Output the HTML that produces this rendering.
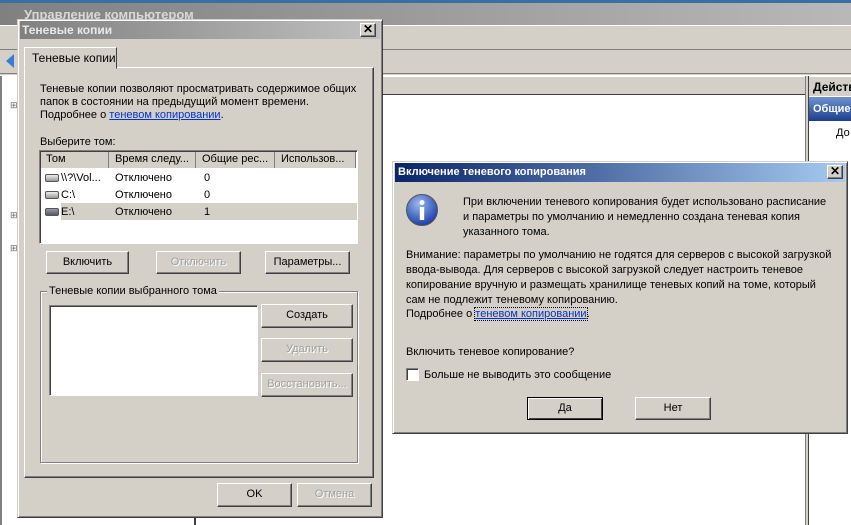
<!DOCTYPE html>
<html><head><meta charset="utf-8"><style>
*{box-sizing:border-box;margin:0;padding:0}
body{width:851px;height:525px;overflow:hidden;position:relative;background:#fff;font-family:"Liberation Sans",sans-serif;font-size:11px;color:#000}
.a{position:absolute;white-space:nowrap}
.btn{position:absolute;background:#d4d0c8;border:1px solid;border-color:#fff #404040 #404040 #fff;box-shadow:inset -1px -1px 0 #808080;text-align:center;line-height:20px;font-size:11px}
.dis{color:#a0a0a0;text-shadow:1px 1px 0 #fff}
.sunk{border:1px solid;border-color:#808080 #fff #fff #808080;box-shadow:inset 1px 1px 0 #404040}
.lnk{color:#0033cc;text-decoration:underline}
.drv{display:inline-block;width:14px;height:8px;border:1px solid #555;border-radius:2px;background:linear-gradient(#eee,#999);vertical-align:middle;margin-right:2px}
</style></head><body>
<div class="a" style="left:0;top:0;width:851px;height:3px;background:#3a6ea5"></div>
<div class="a" style="left:0;top:3px;width:851px;height:22px;background:linear-gradient(90deg,#808080,#b8b8b8);color:#d8d8d8;font-weight:bold;font-size:13px;padding:4px 0 0 24px">Управление компьютером</div>
<div class="a" style="left:0;top:25px;width:851px;height:50px;background:#d4d0c8;border-top:1px solid #fff"></div>
<div class="a" style="left:0;top:49px;width:851px;height:1px;background:#808080"></div>
<div class="a" style="left:0;top:73px;width:851px;height:1px;background:#808080"></div>
<div class="a" style="left:6px;top:54px;width:0;height:0;border:7px solid transparent;border-right:8px solid #3a7bd5;border-left:0"></div>
<div class="a" style="left:0;top:76px;width:851px;height:449px;background:#fff"></div>
<div class="a" style="left:196px;top:77px;width:612px;height:18px;background:#d4d0c8;border-bottom:1px solid #404040"></div>
<div class="a" style="left:805px;top:76px;width:4px;height:449px;background:#d4d0c8;border-left:1px solid #808080;border-right:1px solid #404040"></div>
<div class="a" style="left:809px;top:77px;width:42px;height:19px;background:#d4d0c8;font-weight:bold;font-size:12px;padding:3px 0 0 4px;overflow:hidden">Действия</div>
<div class="a" style="left:809px;top:97px;width:42px;height:24px;background:linear-gradient(#6d93d0,#1c3e8c);color:#fff;font-weight:bold;font-size:11px;padding:6px 0 0 4px;overflow:hidden">Общие</div>
<div class="a" style="left:836px;top:127px;font-size:11px">До</div>
<div class="a" style="left:0;top:76px;width:2px;height:449px;background:#808080"></div>
<div class="a" style="left:194px;top:76px;width:2px;height:449px;background:#404040"></div>
<div class="a" style="left:10px;top:100px;font-size:9px;color:#666">⊞</div>
<div class="a" style="left:10px;top:210px;font-size:9px;color:#666">⊞</div>
<div class="a" style="left:10px;top:243px;font-size:9px;color:#666">⊞</div>

<div class="a" style="left:17px;top:19px;width:366px;height:499px;background:#d4d0c8;border:1px solid;border-color:#d4d0c8 #404040 #404040 #d4d0c8;box-shadow:inset 1px 1px 0 #fff,inset -1px -1px 0 #808080"></div>
<div class="a" style="left:20px;top:21px;width:360px;height:18px;background:linear-gradient(90deg,#808080,#c0c0c0);color:#e8e8e8;font-weight:bold;font-size:12px;padding:2px 0 0 2px">Теневые копии</div>
<div class="btn" style="left:360px;top:23px;width:16px;height:14px;line-height:11px;font-weight:bold;font-size:12px">✕</div>
<div class="a" style="left:24px;top:67px;width:350px;height:411px;border:1px solid;border-color:#fff #404040 #404040 #fff;box-shadow:inset -1px -1px 0 #808080"></div>
<div class="a" style="left:24px;top:47px;width:93px;height:22px;background:#d4d0c8;border:1px solid;border-color:#fff #404040 #d4d0c8 #fff;padding:3px 0 0 7px;font-size:12px">Теневые копии</div>
<div class="a" style="left:40px;top:83px;line-height:13px;font-size:11px">Теневые копии позволяют просматривать содержимое общих<br>папок в состоянии на предыдущий момент времени.<br>Подробнее о <span class="lnk">теневом копировании</span>.</div>
<div class="a" style="left:40px;top:136px;font-size:11px">Выберите том:</div>
<div class="a sunk" style="left:39px;top:150px;width:319px;height:94px;background:#fff"></div>
<div class="a" style="left:41px;top:152px;width:315px;height:16px;background:#d4d0c8;font-size:11px">
<div class="a" style="left:0;width:68px;height:16px;border-right:1px solid #808080;padding:1px 0 0 5px">Том</div>
<div class="a" style="left:68px;width:87px;height:16px;border-right:1px solid #808080;padding:1px 0 0 6px">Время следу...</div>
<div class="a" style="left:155px;width:79px;height:16px;border-right:1px solid #808080;padding:1px 0 0 6px">Общие рес...</div>
<div class="a" style="left:234px;width:81px;height:16px;border-right:1px solid #808080;padding:1px 0 0 6px">Использов...</div></div>
<div class="a" style="left:61px;top:203px;width:296px;height:17px;background:#d4d0c8"></div>
<div class="a" style="left:45px;top:170px;line-height:17px;font-size:11px"><span class="drv"></span>\\?\Vol...<br><span class="drv"></span>C:\<br><span class="drv" style="background:linear-gradient(#99a,#556)"></span>E:\</div>
<div class="a" style="left:115px;top:170px;line-height:17px;font-size:11px">Отключено<br>Отключено<br>Отключено</div>
<div class="a" style="left:204px;top:170px;line-height:17px;font-size:11px">0<br>0<br>1</div>
<div class="btn" style="left:46px;top:251px;width:83px;height:23px">Включить</div>
<div class="btn dis" style="left:156px;top:251px;width:85px;height:23px">Отключить</div>
<div class="btn" style="left:265px;top:251px;width:85px;height:23px">Параметры...</div>
<div class="a" style="left:40px;top:291px;width:318px;height:172px;border:1px solid #808080;box-shadow:1px 1px 0 #fff,inset 1px 1px 0 #fff"></div>
<div class="a" style="left:47px;top:285px;background:#d4d0c8;padding:0 2px;font-size:11px">Теневые копии выбранного тома</div>
<div class="a sunk" style="left:49px;top:305px;width:209px;height:91px;background:#fff"></div>
<div class="btn" style="left:261px;top:304px;width:92px;height:24px">Создать</div>
<div class="btn dis" style="left:261px;top:338px;width:92px;height:24px">Удалить</div>
<div class="btn dis" style="left:261px;top:373px;width:92px;height:24px">Восстановить...</div>
<div class="btn" style="left:217px;top:483px;width:75px;height:24px">OK</div>
<div class="btn dis" style="left:297px;top:483px;width:75px;height:24px">Отмена</div>

<div class="a" style="left:392px;top:161px;width:456px;height:273px;background:#d4d0c8;border:1px solid;border-color:#d4d0c8 #404040 #404040 #d4d0c8;box-shadow:inset 1px 1px 0 #fff,inset -1px -1px 0 #808080"></div>
<div class="a" style="left:395px;top:163px;width:450px;height:19px;background:linear-gradient(90deg,#0a246a,#a6caf0);color:#fff;font-weight:bold;font-size:11px;padding:3px 0 0 3px">Включение теневого копирования</div>
<div class="btn" style="left:827px;top:165px;width:16px;height:14px;line-height:11px;font-weight:bold;font-size:12px">✕</div>
<svg class="a" style="left:405px;top:193px" width="34" height="34"><defs><radialGradient id="g" cx="40%" cy="30%" r="70%"><stop offset="0" stop-color="#9bb8f0"/><stop offset="1" stop-color="#1e40a8"/></radialGradient></defs><circle cx="17" cy="17" r="15.5" fill="url(#g)" stroke="#555" stroke-width="1"/><circle cx="17" cy="9.5" r="2.5" fill="#fff"/><rect x="14.8" y="14" width="4.4" height="13" fill="#fff"/></svg>
<div class="a" style="left:463px;top:195px;line-height:15px;font-size:11px">При включении теневого копирования будет использовано расписание<br>и параметры по умолчанию и немедленно создана теневая копия<br>указанного тома.</div>
<div class="a" style="left:406px;top:248px;line-height:15px;font-size:11px">Внимание: параметры по умолчанию не годятся для серверов с высокой загрузкой<br>ввода-вывода. Для серверов с высокой загрузкой следует настроить теневое<br>копирование вручную и размещать хранилище теневых копий на томе, который<br>сам не подлежит теневому копированию.</div>
<div class="a" style="left:406px;top:308px;font-size:11px">Подробнее о <span class="lnk" style="outline:1px dotted #000">теневом копировании</span>.</div>
<div class="a" style="left:406px;top:346px;font-size:11px">Включить теневое копирование?</div>
<div class="a sunk" style="left:406px;top:368px;width:13px;height:13px;background:#fff"></div>
<div class="a" style="left:424px;top:369px;font-size:11px">Больше не выводить это сообщение</div>
<div class="btn" style="left:527px;top:397px;width:76px;height:23px;border-color:#000;box-shadow:inset 1px 1px 0 #fff,inset -1px -1px 0 #404040">Да</div>
<div class="btn" style="left:635px;top:397px;width:76px;height:23px">Нет</div>
</body></html>
